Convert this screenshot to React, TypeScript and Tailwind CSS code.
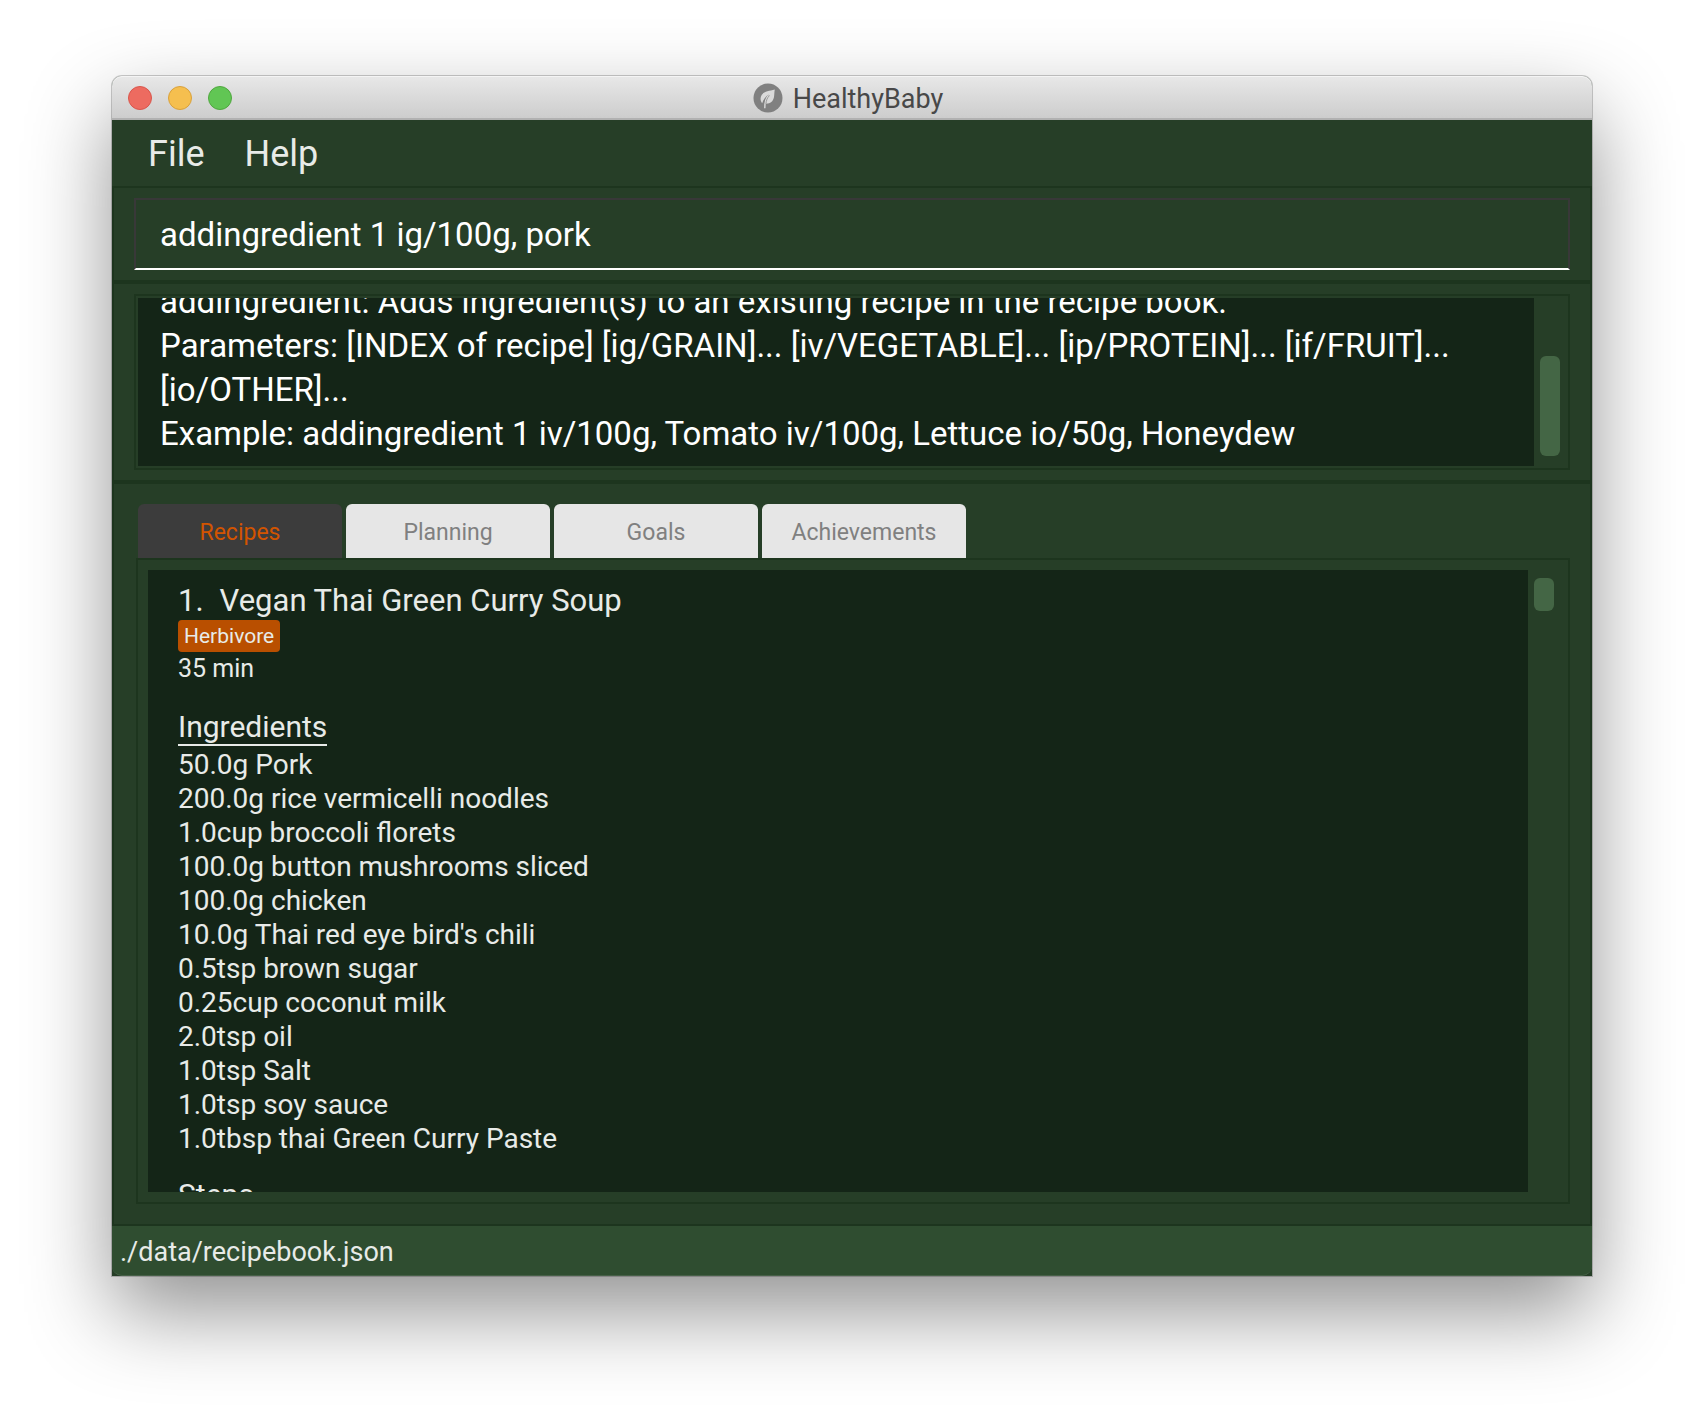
import React from 'react';

const tabs = ['Recipes', 'Planning', 'Goals', 'Achievements'];

const ingredients = [
  '50.0g Pork',
  '200.0g rice vermicelli noodles',
  '1.0cup broccoli florets',
  '100.0g button mushrooms sliced',
  '100.0g chicken',
  "10.0g Thai red eye bird's chili",
  '0.5tsp brown sugar',
  '0.25cup coconut milk',
  '2.0tsp oil',
  '1.0tsp Salt',
  '1.0tsp soy sauce',
  '1.0tbsp thai Green Curry Paste',
];

const resultLines = [
  'addingredient: Adds ingredient(s) to an existing recipe in the recipe book.',
  'Parameters: [INDEX of recipe] [ig/GRAIN]... [iv/VEGETABLE]... [ip/PROTEIN]... [if/FRUIT]...',
  '[io/OTHER]...',
  'Example: addingredient 1 iv/100g, Tomato iv/100g, Lettuce io/50g, Honeydew',
];

function LeafIcon() {
  return (
    <svg viewBox="0 0 30 30" className="size-[30px]" aria-hidden="true">
      <circle cx="15" cy="15" r="14.5" fill="#808080" />
      <path
        d="M21.800 6.500C16.500 8 11.500 8 8.800 11.800C7 14.500 7.200 18 9.200 20.300C10.400 16.500 12.500 13.300 16 11.500C13.600 14.300 12.700 17.500 12.600 20.700C17 21 20 18.500 20.900 14.500C21.500 11.500 21.200 9 21.800 6.500Z"
        fill="#dadada"
      />
      <path d="M15.300 12.800C12.500 15.500 11.700 19.500 11.800 25.300" fill="none" stroke="#dadada" strokeWidth="1.400" />
      <path d="M16.500 12.500C14.200 14.800 13.200 17.500 13 20.800" fill="none" stroke="#808080" strokeWidth="0.700" />
    </svg>
  );
}

function TitleBar() {
  return (
    <header className="relative flex h-11 shrink-0 items-center justify-center rounded-t-[10px] border-b-2 border-[#b1b1b1] bg-linear-to-b from-[#e8e8e8] to-[#cdcdcd] pt-0.5 shadow-[inset_0_1px_0_#f4f4f4]">
      <div className="absolute left-4 flex gap-4">
        <button aria-label="Close" className="size-6 rounded-full border border-[#d9564c] bg-[#ed6b60]" />
        <button aria-label="Minimize" className="size-6 rounded-full border border-[#d9a13c] bg-[#f5bf4f]" />
        <button aria-label="Zoom" className="size-6 rounded-full border border-[#50a73f] bg-[#61c654]" />
      </div>
      <div className="flex items-center gap-[10px] pr-2">
        <LeafIcon />
        <h1 className="pt-0.5 text-[27px] leading-8 text-[#484848]">HealthyBaby</h1>
      </div>
    </header>
  );
}

export default function App() {
  return (
    <div className="flex h-screen min-h-[900px] flex-col overflow-hidden bg-white px-28 pt-[76px] pb-[148px] font-['Roboto',sans-serif] text-[#e8ebe8]">
      <div className="flex min-h-0 flex-1 flex-col rounded-t-[10px] bg-[#263e27] shadow-[0_0_0_1px_rgba(0,0,0,0.2),0_36px_84px_rgba(0,0,0,0.43)]">
        <TitleBar />

        <nav className="flex h-[66px] shrink-0 items-center gap-10 px-9 pt-0.5 text-4xl">
          <button>File</button>
          <button>Help</button>
        </nav>

        <main className="flex min-h-0 flex-1 flex-col border-2 border-[#1d351e]">
          <div className="shrink-0 border-b-4 border-[#1d351e] px-5 py-[10px]">
            <input
              aria-label="Command"
              defaultValue="addingredient 1 ig/100g, pork"
              className="h-[72px] w-full border-2 border-[#383838] border-b-white bg-transparent px-6 text-[33px] text-white outline-none"
            />
          </div>

          <div className="shrink-0 border-b-4 border-[#1d351e] px-5 py-[10px]">
            <div className="flex h-[176px] border-2 border-[#1d351e] p-0.5">
              <div className="flex min-w-0 flex-1 flex-col justify-end overflow-hidden bg-[#142517] px-[22px] pb-[10px] text-[33px] leading-[44px] whitespace-nowrap text-white">
                {resultLines.map((line) => (
                  <p key={line}>{line}</p>
                ))}
              </div>
              <div className="flex w-8 items-end justify-center pb-[10px]">
                <div className="h-[100px] w-5 rounded-md bg-[#446645]" />
              </div>
            </div>
          </div>

          <div className="flex min-h-0 flex-1 flex-col px-5 py-5">
            <div role="tablist" className="flex shrink-0 gap-1 px-1">
              {tabs.map((tab, i) => (
                <button
                  key={tab}
                  role="tab"
                  aria-selected={i === 0}
                  className={
                    i === 0
                      ? 'h-[54px] w-[204px] rounded-t-md bg-[#3c3c3c] pt-1 text-[23px] text-[#d35400]'
                      : 'h-[54px] w-[204px] rounded-t-md bg-[#e6e6e6] pt-1 text-[23px] text-[#808080]'
                  }
                >
                  {tab}
                </button>
              ))}
            </div>
            <div className="ml-0.5 flex min-h-0 flex-1 border-2 border-[#1d351e] py-[10px] pl-[10px]">
              <div className="min-w-0 flex-1 overflow-hidden bg-[#142517] px-[30px] pt-3">
                <article>
                  <h2 className="flex gap-4 text-[31px] leading-[38px]">
                    <span>1.</span>
                    <span>Vegan Thai Green Curry Soup</span>
                  </h2>
                  <span className="block h-8 w-fit rounded-sm bg-[#b94f00] px-1.5 text-[21px] leading-8">Herbivore</span>
                  <p className="text-[25px] leading-[34px]">35 min</p>
                  <h3 className="mt-6 w-fit border-b-2 border-[#e8ebe8] text-[30px] leading-[34px]">Ingredients</h3>
                  <ul className="pt-0.5 text-[28px] leading-[34px]">
                    {ingredients.map((item) => (
                      <li key={item}>{item}</li>
                    ))}
                  </ul>
                  <h3 className="mt-[22px] w-fit border-b-2 border-[#e8ebe8] text-[30px] leading-[34px]">Steps</h3>
                </article>
              </div>
              <div className="flex w-10 shrink-0 justify-start pt-2 pl-1.5">
                <div className="h-[33px] w-5 rounded-md bg-[#446645]" />
              </div>
            </div>
          </div>
        </main>

        <footer className="flex h-[50px] shrink-0 items-center rounded-b-[10px] border-b border-[#466047] bg-[#2f4d30] px-2 pt-1 text-[27px]">
          ./data/recipebook.json
        </footer>
      </div>
    </div>
  );
}
